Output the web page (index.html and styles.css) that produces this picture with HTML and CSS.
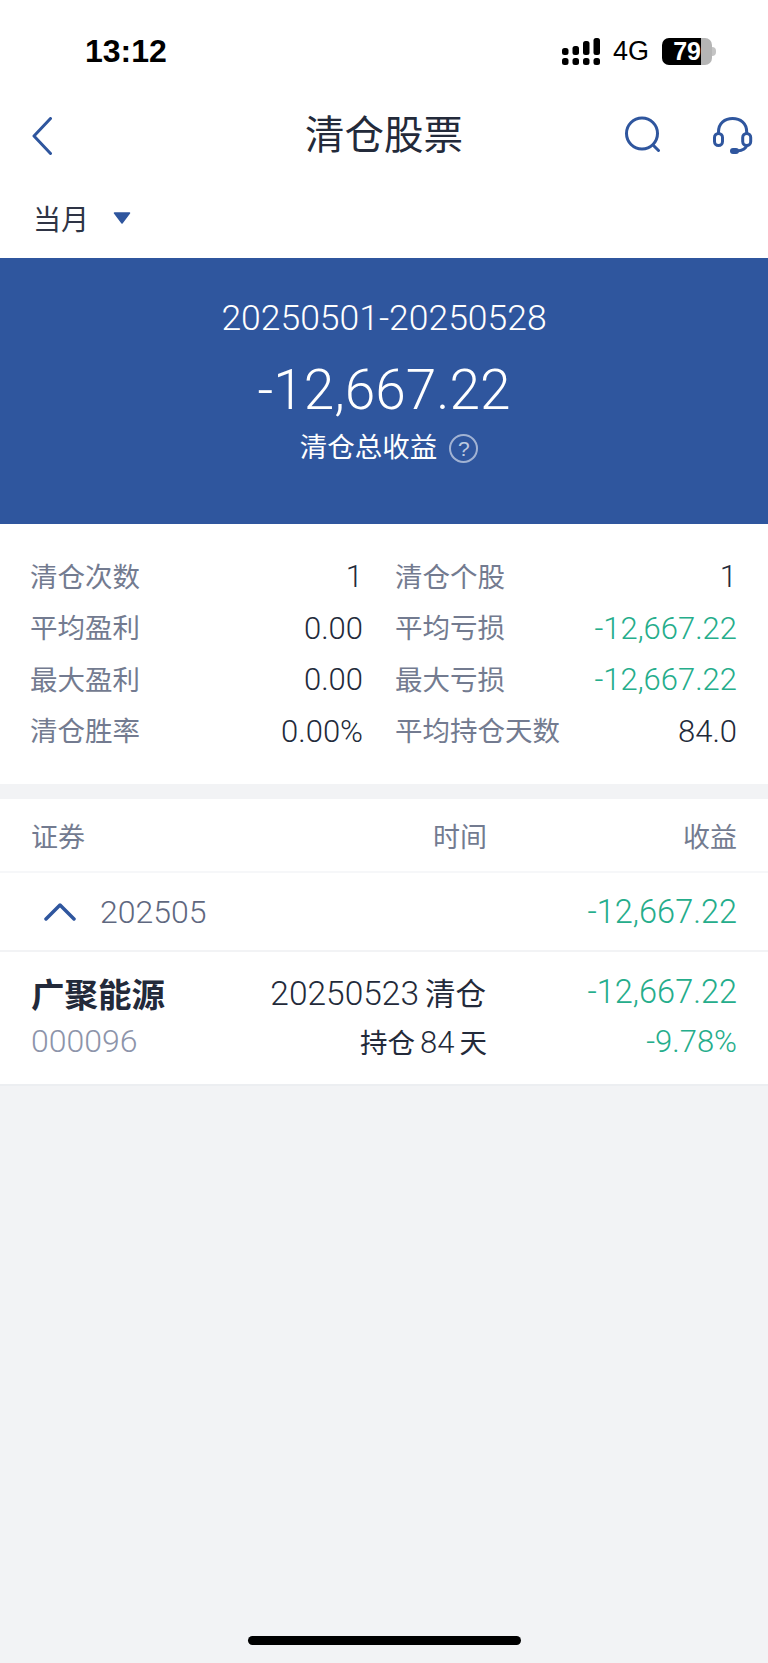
FILE: index.html
```html
<!DOCTYPE html>
<html lang="zh-CN">
<head>
  <meta charset="UTF-8">
  <title>清仓股票</title>
  <link rel="stylesheet" href="styles.css">
</head>
<body>
  <div class="page">
    <div class="status-bar">
      <span class="time">13:12</span>
      <div class="status-right">
        <svg class="signal" viewBox="0 0 38 27" width="38" height="27">
          <rect x="0" y="10" width="6.500" height="7" rx="2.500"/>
          <rect x="10.500" y="8" width="6.500" height="9" rx="2.500"/>
          <rect x="21" y="3" width="6.500" height="14" rx="2.500"/>
          <rect x="31.500" y="0" width="6.500" height="17" rx="2.500"/>
          <rect x="0" y="20" width="6.500" height="7" rx="2.500"/>
          <rect x="10.500" y="20" width="6.500" height="7" rx="2.500"/>
          <rect x="21" y="20" width="6.500" height="7" rx="2.500"/>
          <rect x="31.500" y="20" width="6.500" height="7" rx="2.500"/>
        </svg>
        <span class="net">4G</span>
        <div class="battery">
          <div class="battery-fill"><span>79</span></div>
          <div class="battery-rest"></div>
        </div>
        <div class="battery-tip"></div>
      </div>
    </div>

    <div class="nav">
      <svg class="back" viewBox="0 0 20 38" width="20" height="38">
        <path d="M18.500 1.500 L2 19 L18.500 36.500" fill="none" stroke="#2f569e" stroke-width="3" stroke-linecap="round" stroke-linejoin="round"/>
      </svg>
      <span class="nav-title">清仓股票</span>
      <svg class="search" viewBox="0 0 36 36" width="36" height="36">
        <circle cx="17" cy="17.500" r="15.500" fill="none" stroke="#2f569e" stroke-width="3"/>
        <path d="M28.500 29.500 L33.500 34.500" stroke="#2f569e" stroke-width="3" stroke-linecap="round"/>
      </svg>
      <svg class="service" viewBox="0 0 40 40" width="40" height="40">
        <path d="M5.500 17 V16 C5.500 7 12 2.500 19.600 2.500 C27.200 2.500 33.700 7 33.700 16 V17" fill="none" stroke="#2f569e" stroke-width="3"/>
        <rect x="1.500" y="17.500" width="8" height="12" rx="4" fill="none" stroke="#2f569e" stroke-width="3"/>
        <rect x="29.700" y="17.500" width="8" height="12" rx="4" fill="none" stroke="#2f569e" stroke-width="3"/>
        <path d="M33.700 29.500 C33 33 29 34.500 24 35" fill="none" stroke="#2f569e" stroke-width="3"/>
        <rect x="17" y="32" width="9" height="6" rx="3" fill="#2f569e"/>
      </svg>
    </div>

    <div class="filter">
      <span class="filter-label">当月</span>
      <svg class="caret" viewBox="0 0 18 12" width="18" height="12">
        <path d="M1.500 1 H16.500 L9 11 Z" fill="#2f569e" stroke="#2f569e" stroke-width="1.500" stroke-linejoin="round"/>
      </svg>
    </div>

    <div class="banner">
      <div class="banner-date">20250501-20250528</div>
      <div class="banner-amount">-12,667.22</div>
      <div class="banner-label">
        <span>清仓总收益</span>
        <span class="help">?</span>
      </div>
    </div>

    <div class="stats">
      <div class="stat"><span class="stat-name">清仓次数</span><span class="stat-value">1</span></div>
      <div class="stat"><span class="stat-name">清仓个股</span><span class="stat-value">1</span></div>
      <div class="stat"><span class="stat-name">平均盈利</span><span class="stat-value">0.00</span></div>
      <div class="stat"><span class="stat-name">平均亏损</span><span class="stat-value green">-12,667.22</span></div>
      <div class="stat"><span class="stat-name">最大盈利</span><span class="stat-value">0.00</span></div>
      <div class="stat"><span class="stat-name">最大亏损</span><span class="stat-value green">-12,667.22</span></div>
      <div class="stat"><span class="stat-name">清仓胜率</span><span class="stat-value">0.00%</span></div>
      <div class="stat"><span class="stat-name">平均持仓天数</span><span class="stat-value">84.0</span></div>
    </div>

    <div class="list">
      <div class="list-head">
        <span class="col-name">证券</span>
        <span class="col-time">时间</span>
        <span class="col-gain">收益</span>
      </div>
      <div class="group">
        <svg class="chevron" viewBox="0 0 32 18" width="32" height="18">
          <path d="M2 16 L16 2 L30 16" fill="none" stroke="#2f569e" stroke-width="3.500" stroke-linecap="round" stroke-linejoin="round"/>
        </svg>
        <span class="group-month">202505</span>
        <span class="group-gain green">-12,667.22</span>
      </div>
      <div class="trade">
        <div class="trade-line">
          <span class="trade-name">广聚能源</span>
          <span class="trade-date"><span class="trade-day">20250523</span>清仓</span>
          <span class="trade-gain green">-12,667.22</span>
        </div>
        <div class="trade-line sub">
          <span class="trade-code">000096</span>
          <span class="trade-hold">持仓<span class="hold-days">84</span>天</span>
          <span class="trade-pct green">-9.78%</span>
        </div>
      </div>
    </div>

    <div class="home-bar"></div>
  </div>
</body>
</html>
```

FILE: styles.css
```css
* { box-sizing: border-box; }
html, body { margin: 0; padding: 0; }
body {
  font-family: "Roboto", "Noto Sans CJK SC", sans-serif;
  background: #f2f3f5;
  color: #232a3a;
}
.page { width: 768px; height: 1663px; display: flex; flex-direction: column; position: relative; overflow: hidden; }
.green { color: #25ad8b; }

.status-bar { height: 102px; background: #fff; display: flex; justify-content: space-between; align-items: center; padding: 0 52px 0 85px; font-family: "Liberation Sans", sans-serif; }
.time { font-size: 32px; font-weight: 700; color: #000; }
.status-right { display: flex; align-items: center; }
.signal { fill: #000; margin-right: 13px; }
.net { font-size: 27px; color: #000; width: 49px; }
.battery { width: 50px; height: 27px; border-radius: 7px; overflow: hidden; display: flex; }
.battery-fill { width: 39px; background: #000; color: #fff; font-size: 25px; font-weight: 700; line-height: 27px; text-align: right; }
.battery-rest { flex: 1; background: #b5b5b5; }
.battery-tip { width: 4px; height: 9px; background: #c4c4c4; border-radius: 0 4px 4px 0; }

.nav { height: 67px; background: #fff; display: flex; align-items: center; position: relative; padding-left: 32px; }
.nav-title { position: absolute; left: 0; right: 0; text-align: center; font-size: 39.500px; line-height: 67px; }
.search { position: absolute; left: 625px; top: 14px; }
.service { position: absolute; left: 713px; top: 14px; }

.filter { height: 89px; background: #fff; display: flex; align-items: center; padding: 9px 0 0 33px; gap: 24px; }
.filter-label { font-size: 28px; color: #2e3445; }

.banner { height: 266px; background: #2f569e; color: #fff; display: flex; flex-direction: column; align-items: center; padding-top: 36px; }
.banner-date { font-size: 35.500px; line-height: 48px; font-weight: 300; }
.banner-amount { font-size: 55px; line-height: 64px; margin-top: 16px; font-weight: 300; }
.banner-label { display: flex; align-items: center; gap: 12px; font-size: 27.500px; line-height: 40px; margin-top: 6px; padding-left: 10px; }
.help { width: 29px; height: 29px; border: 2px solid rgba(255,255,255,0.55); border-radius: 50%; font-family: "Liberation Sans", sans-serif; font-size: 21px; line-height: 25px; text-align: center; color: rgba(255,255,255,0.7); }

.stats { height: 260px; background: #fff; display: grid; grid-template-columns: 333px 342px; grid-auto-rows: 51.500px; column-gap: 32px; padding: 27px 0 0 30px; }
.stat { display: flex; justify-content: space-between; align-items: center; }
.stat-name { font-size: 27.500px; color: #737b90; padding-bottom: 4px; }
.stat-value { font-size: 31px; font-weight: 300; }

.list { margin-top: 15px; background: #fff; }
.list-head { height: 74px; display: flex; align-items: center; padding: 0 31px; font-size: 27px; color: #737b90; border-bottom: 2px solid #f6f7f9; }
.col-name { width: 402px; }
.col-time { width: 100px; flex: 1; }
.col-gain { text-align: right; }
.group { height: 79px; display: flex; align-items: center; padding: 0 31px 0 44px; border-bottom: 2px solid #f2f3f5; }
.group-month { font-size: 32px; font-weight: 300; color: #5f6880; margin-left: 24px; flex: 1; }
.group-gain { font-size: 32.500px; font-weight: 300; }
.trade { height: 134px; padding: 15px 31px 0; border-bottom: 2px solid #eceef1; }
.trade-line { display: flex; align-items: center; height: 50px; }
.trade-line.sub { height: 48px; }
.trade-name { font-size: 33.500px; font-weight: 700; width: 200px; }
.trade-date { font-size: 30.500px; width: 255px; text-align: right; }
.trade-day { font-size: 33.500px; font-weight: 300; margin-right: 6px; }
.trade-gain { font-size: 32.500px; font-weight: 300; flex: 1; text-align: right; }
.trade-code { font-size: 32px; font-weight: 300; color: #8d94aa; width: 200px; }
.trade-hold { font-size: 27.500px; width: 256px; text-align: right; }
.hold-days { font-size: 31px; font-weight: 300; margin: 0 5px; }
.trade-pct { font-size: 31px; font-weight: 300; flex: 1; text-align: right; }

.home-bar { position: absolute; left: 248px; top: 1636px; width: 273px; height: 9px; border-radius: 5px; background: #000; }
```
